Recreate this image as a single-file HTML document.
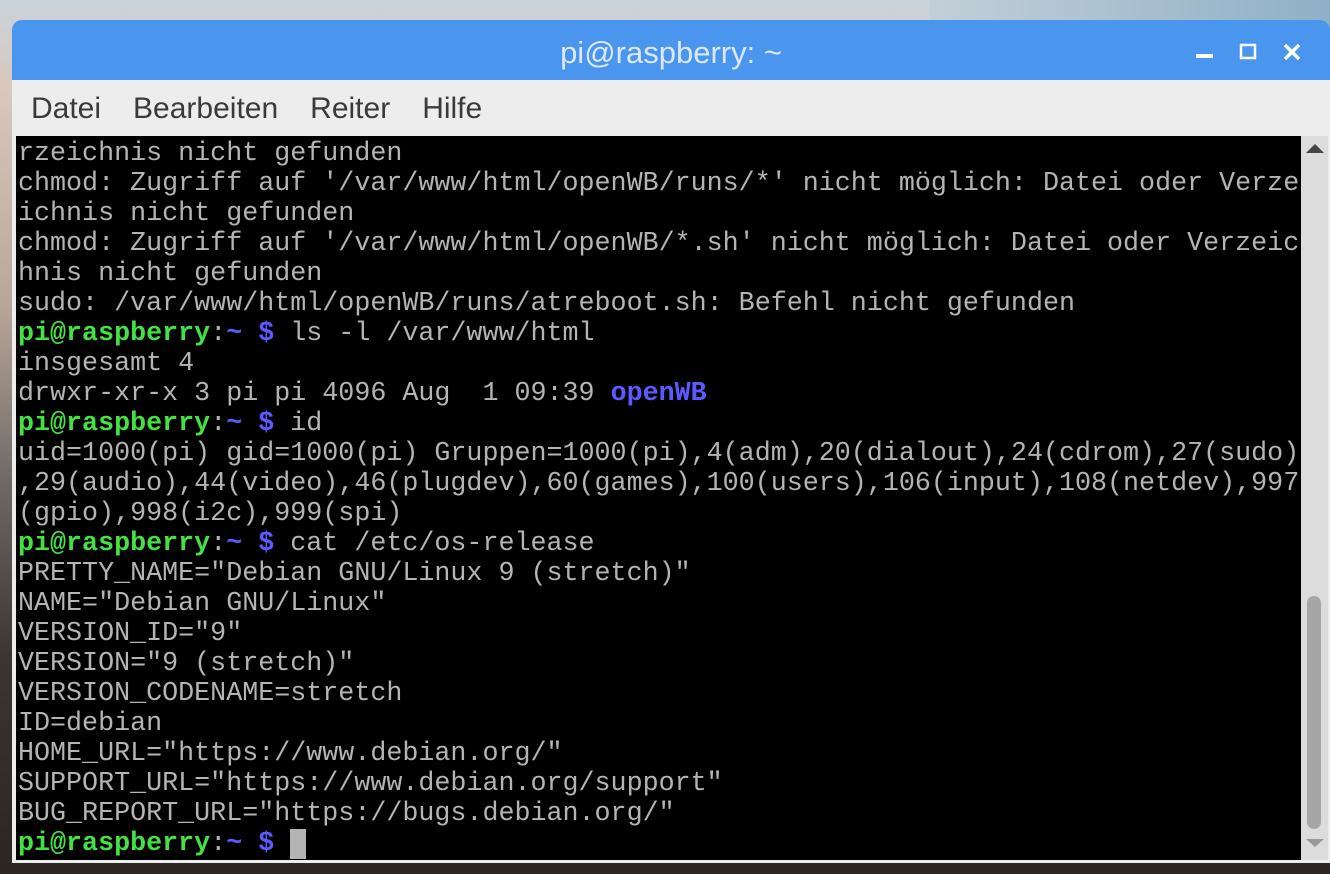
<!DOCTYPE html>
<html><head><meta charset="utf-8"><style>
html,body{margin:0;width:1330px;height:874px;overflow:hidden;}
body{position:relative;background:linear-gradient(180deg,#c9d3dc 0%,#d9c8be 10%,#b9a69a 35%,#6e6a66 55%,#3a3633 75%,#2b2622 100%);}
.bgr{position:absolute;right:0;top:0;width:400px;height:30px;background:linear-gradient(90deg,#c3cfd8,#8fb0c7);}
.win{position:absolute;left:12px;top:20px;width:1318px;height:843px;background:#ededed;border-radius:10px 10px 0 0;overflow:hidden;}
.title{height:60px;background:#4a95ee;color:#dce8f8;font:31px "Liberation Sans",sans-serif;text-align:center;line-height:66px;position:relative;}
.menu{height:56px;font:30px "Liberation Sans",sans-serif;color:#3a3a3a;line-height:58px;padding-left:19px;}
.menu span{margin-right:32px;}
.term{position:absolute;left:4px;top:116px;width:1285px;height:724px;background:#000;}
pre{margin:0;padding:3px 0 0 2px;font:26.7px/30px "Liberation Mono",monospace;color:#b4b4b4;}
.g{color:#44e044;font-weight:bold}.b{color:#5a5aff;font-weight:bold}
.sb{position:absolute;left:1289px;top:116px;width:27px;height:724px;background:#dcdcdc;}
.th{position:absolute;left:6px;top:460px;width:14px;height:233px;background:#a6a6a6;border-radius:7px;}
.cur{background:#b4b4b4;}
</style></head><body>
<div class="bgr"></div>
<div class="win">
<div class="title">pi@raspberry: ~
<svg style="position:absolute;left:1180px;top:22px" width="110" height="22" viewBox="0 0 110 22"><rect x="4" y="12" width="17" height="4" fill="#fff"/><rect x="49" y="3" width="14" height="13" fill="none" stroke="#fff" stroke-width="2.5"/><path d="M93 3L107 17M107 3L93 17" stroke="#fff" stroke-width="3.5"/></svg>
</div>
<div class="menu"><span>Datei</span><span>Bearbeiten</span><span>Reiter</span><span>Hilfe</span></div>
<div class="term"><pre>rzeichnis nicht gefunden
chmod: Zugriff auf '/var/www/html/openWB/runs/*' nicht möglich: Datei oder Verze
ichnis nicht gefunden
chmod: Zugriff auf '/var/www/html/openWB/*.sh' nicht möglich: Datei oder Verzeic
hnis nicht gefunden
sudo: /var/www/html/openWB/runs/atreboot.sh: Befehl nicht gefunden
<span class="g">pi@raspberry</span>:<span class="b">~ $</span> ls -l /var/www/html
insgesamt 4
drwxr-xr-x 3 pi pi 4096 Aug  1 09:39 <span class="b">openWB</span>
<span class="g">pi@raspberry</span>:<span class="b">~ $</span> id
uid=1000(pi) gid=1000(pi) Gruppen=1000(pi),4(adm),20(dialout),24(cdrom),27(sudo)
,29(audio),44(video),46(plugdev),60(games),100(users),106(input),108(netdev),997
(gpio),998(i2c),999(spi)
<span class="g">pi@raspberry</span>:<span class="b">~ $</span> cat /etc/os-release
PRETTY_NAME="Debian GNU/Linux 9 (stretch)"
NAME="Debian GNU/Linux"
VERSION_ID="9"
VERSION="9 (stretch)"
VERSION_CODENAME=stretch
ID=debian
HOME_URL="https://www.debian.org/"
SUPPORT_URL="https://www.debian.org/support"
BUG_REPORT_URL="https://bugs.debian.org/"
<span class="g">pi@raspberry</span>:<span class="b">~ $</span> <span class="cur"> </span></pre></div>
<div class="sb"><svg style="position:absolute;left:4px;top:6px" width="20" height="12"><path d="M1 11L10 2L19 11Z" fill="#444"/></svg><div class="th"></div><svg style="position:absolute;left:4px;top:702px" width="20" height="10"><path d="M1 1L10 9L19 1Z" fill="#999"/></svg></div>
</div>
</body></html>
